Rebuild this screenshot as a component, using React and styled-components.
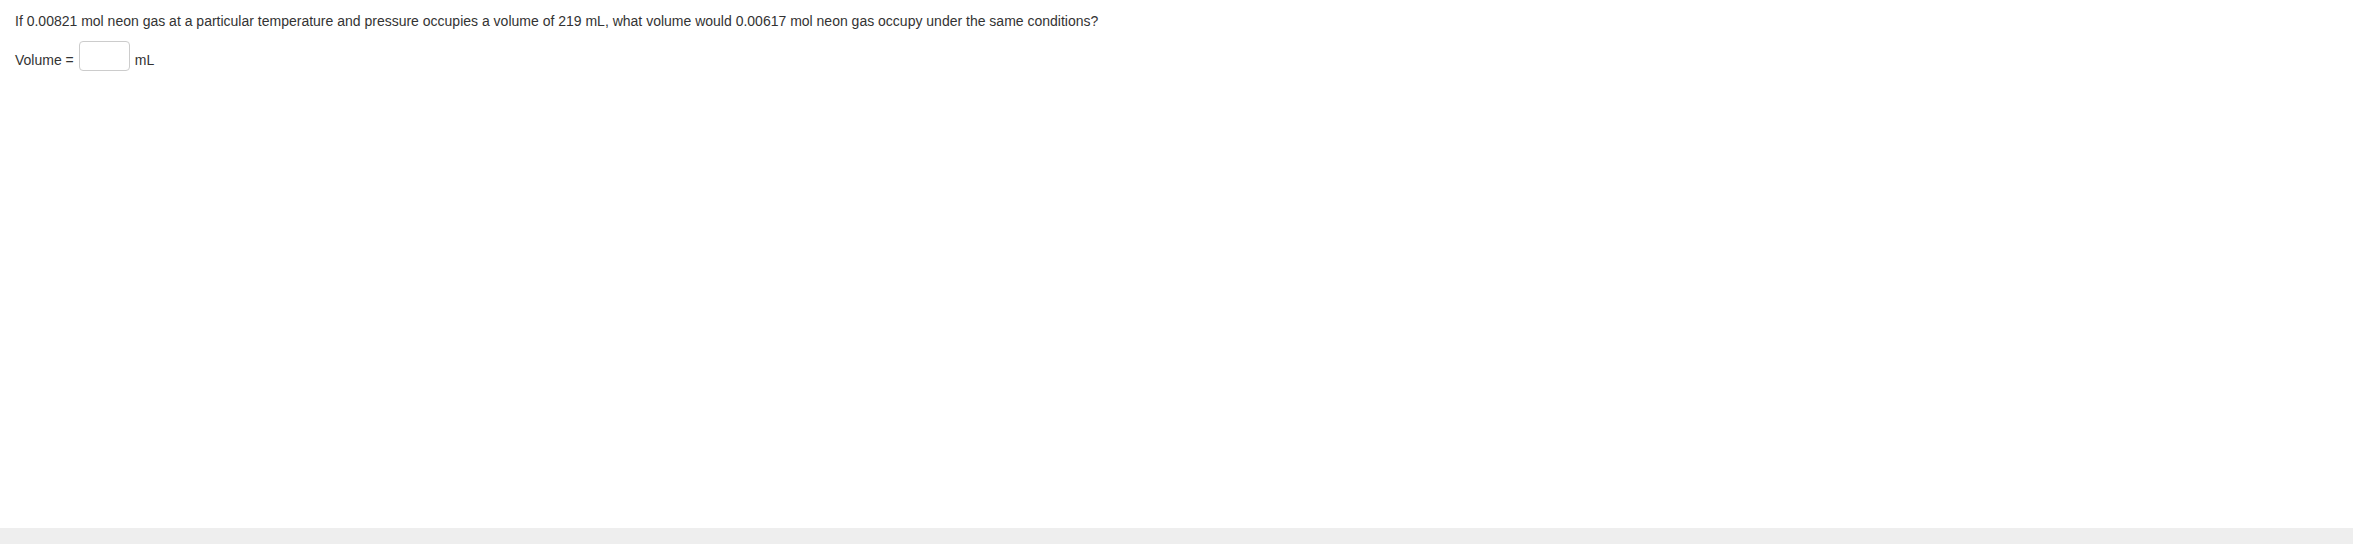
import React from 'react'
import styled, { createGlobalStyle } from 'styled-components'

const GlobalStyle = createGlobalStyle`
  html, body {
    margin: 0;
    padding: 0;
    background: #ffffff;
  }
  #root {
    min-height: 100vh;
    display: flex;
    flex-direction: column;
  }
`

const Page = styled.div`
  flex: 1;
  display: flex;
  flex-direction: column;
  font-family: "Liberation Sans", Arial, sans-serif;
  font-size: 14px;
  line-height: 20px;
  color: #333333;
`

const Content = styled.div`
  flex: 1;
  padding: 11px 15px 0 15px;
`

const Question = styled.p`
  margin: 0 0 10px 0;
`

const AnswerRow = styled.div`
  display: flex;
  align-items: flex-start;
  gap: 5px;
`

const Label = styled.span`
  margin-top: 9px;
  white-space: nowrap;
`

const AnswerInput = styled.input`
  box-sizing: border-box;
  width: 51px;
  height: 30px;
  margin: 0;
  padding: 4px 6px;
  border: 1px solid #cccccc;
  border-radius: 4px;
  background: #ffffff;
  font-family: inherit;
  font-size: 14px;
  color: #333333;
  outline: none;
`

const Footer = styled.div`
  height: 16px;
  background: #eeeeee;
`

export default function App() {
  return (
    <>
      <GlobalStyle />
      <Page>
        <Content>
          <Question>
            If 0.00821 mol neon gas at a particular temperature and pressure occupies a volume of 219 mL, what volume would 0.00617 mol neon gas occupy under the same conditions?
          </Question>
          <AnswerRow>
            <Label>Volume =</Label>
            <AnswerInput type="text" />
            <Label>mL</Label>
          </AnswerRow>
        </Content>
        <Footer />
      </Page>
    </>
  )
}
